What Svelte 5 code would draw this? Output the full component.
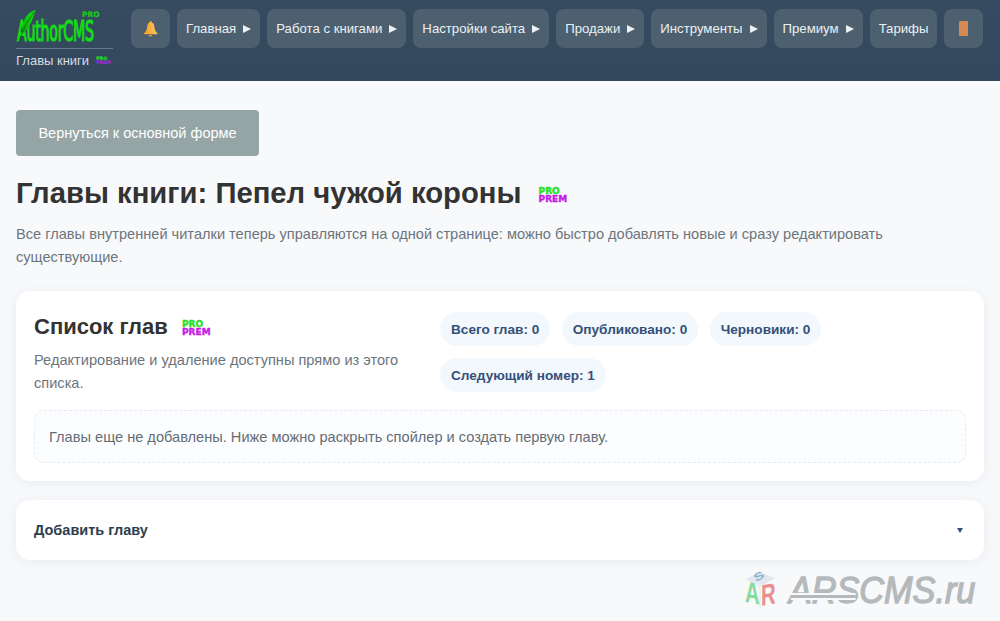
<script>
  const menu = [
    { t: 'Главная', a: true },
    { t: 'Работа с книгами', a: true },
    { t: 'Настройки сайта', a: true },
    { t: 'Продажи', a: true },
    { t: 'Инструменты', a: true },
    { t: 'Премиум', a: true },
    { t: 'Тарифы', a: false }
  ];
  const stats = ['Всего глав: 0', 'Опубликовано: 0', 'Черновики: 0', 'Следующий номер: 1'];
</script>

{#snippet badge(cls)}
  <span class="badge {cls}"><span class="pro">PRO</span><span class="prem">PREM</span></span>
{/snippet}

<header class="top">
  <div class="brand">
    <div class="logo">
      <span class="logotext">AuthorCMS</span>
      <svg class="quill" width="22" height="36" viewBox="0 0 22 36" aria-hidden="true">
        <defs><linearGradient id="q" x1="1" y1="0" x2="0" y2="1"><stop offset="0" stop-color="#0fe80f"/><stop offset="1" stop-color="#0da80d"/></linearGradient></defs>
        <path d="M18.5 1 C11 3 7.5 9 6 15 C5 18 5 21 5.5 24 C10 21 14 15 15.5 10 C16.5 7 17.5 4 18.5 1Z" fill="url(#q)"/>
        <path d="M17 3 L8 17 L2 33" stroke="#077a0c" stroke-width="1" fill="none"/>
      </svg>
      <span class="logopro">PRO</span>
    </div>
    <div class="sub">Главы книги {@render badge('tiny')}</div>
  </div>
  <nav class="nav">
    <button class="item icon" aria-label="Уведомления">
      <svg width="15" height="16" viewBox="0 0 15 16">
        <defs><linearGradient id="bell" x1="0" y1="0" x2="1" y2="0"><stop offset="0" stop-color="#f39c25"/><stop offset="1" stop-color="#fccb63"/></linearGradient></defs>
        <path d="M7.5 0.3c.9 0 1.5.6 1.6 1.4 1.6.6 2.2 2.1 2.3 4 .1 2.6.8 4.3 2.9 6.4.4.5.2 1.2-.5 1.2H1.7c-.7 0-.9-.7-.5-1.2 2.1-2.1 2.8-3.8 2.9-6.4.1-1.9.7-3.4 2.3-4 .1-.8.7-1.4 1.6-1.4z" fill="url(#bell)"/>
        <path d="M5.7 14.1h3.6c-.2 1-.9 1.6-1.8 1.6s-1.6-.6-1.8-1.6z" fill="#e2951f"/>
      </svg>
    </button>
    {#each menu as m}
      <button class="item">{m.t}{#if m.a}<span class="arrow"></span>{/if}</button>
    {/each}
    <button class="item icon" aria-label="Выход">
      <span class="door"></span>
    </button>
  </nav>
</header>

<main class="page">
  <button class="back">Вернуться к основной форме</button>
  <h1 class="title">Главы книги: Пепел чужой короны {@render badge('big')}</h1>
  <p class="lead">Все главы внутренней читалки теперь управляются на одной странице: можно быстро добавлять новые и сразу редактировать существующие.</p>

  <section class="card list">
    <div class="cols">
      <div class="left">
        <h2 class="h2">Список глав {@render badge('mid')}</h2>
        <p class="desc">Редактирование и удаление доступны прямо из этого списка.</p>
      </div>
      <div class="stats">
        {#each stats as s}
          <span class="stat">{s}</span>
        {/each}
      </div>
    </div>
    <div class="empty">Главы еще не добавлены. Ниже можно раскрыть спойлер и создать первую главу.</div>
  </section>

  <section class="card spoiler">
    <span class="sp-title">Добавить главу</span>
    <span class="caret"></span>
  </section>
</main>

<div class="wm">
  <svg class="cube" width="36" height="38" viewBox="0 0 36 38" aria-hidden="true">
    <path d="M2 8 L16 1 L31 7 L16 14Z" fill="#e4e8ee"/>
    <path d="M1 8 L16 15 L16 37 M31 7 L16 15" stroke="#e2e6ea" stroke-width="1" fill="none"/>
    <text x="0" y="0" font-size="13" font-weight="700" fill="#8db4cf" font-family="Liberation Sans, sans-serif" transform="translate(12 11) rotate(-28) scale(1.2 .85)">S</text>
    <text x="0" y="0" font-size="30" font-weight="700" fill="#85dc9e" font-family="Liberation Sans, sans-serif" transform="translate(1 31) skewY(10) scale(.68 1)">A</text>
    <text x="0" y="0" font-size="30" font-weight="700" fill="#e98f8f" font-family="Liberation Sans, sans-serif" transform="translate(17 35) skewY(-10) scale(.68 1)">R</text>
  </svg>
  <span class="wm-text">ARSCMS.ru<span class="wm-bar"></span></span>
</div>

<style>
  :global(body) {
    margin: 0;
    background: #f8f9fb;
    font-family: "Liberation Sans", Arial, sans-serif;
    color: #333;
  }
  :global(html), :global(body) { height: 621px; overflow: hidden; }
  .top {
    height: 81px;
    box-sizing: border-box;
    display: flex;
    align-items: flex-start;
    padding: 9px 16px 0;
    gap: 18px;
    background: linear-gradient(#364a60, #33485d);
  }
  .brand { width: 97px; flex: none; }
  .logo {
    position: relative;
    height: 39px;
    border-bottom: 1px solid #66788a;
    width: 97px;
  }
  .quill { position: absolute; left: 1px; top: 0; }
  .logotext {
    position: absolute;
    left: 1px;
    top: 11px;
    color: #13e013;
    font-family: "DejaVu Sans", sans-serif;
    font-weight: 400;
    font-size: 29px;
    line-height: 22px;
    letter-spacing: -.5px;
    -webkit-text-stroke: 1.2px currentColor;
    transform: scaleX(.49);
    transform-origin: left center;
    white-space: nowrap;
  }
  .logopro {
    position: absolute;
    left: 66px;
    top: 1px;
    color: #13d013;
    font-family: "DejaVu Sans", sans-serif;
    font-size: 7.5px;
    line-height: 9px;
    font-weight: 700;
    -webkit-text-stroke: .2px currentColor;
  }
  .sub {
    color: #d5dde3;
    font-size: 13px;
    line-height: 16px;
    margin-top: 4px;
    display: flex;
    align-items: center;
    gap: 7px;
    white-space: nowrap;
  }
  .nav {
    display: flex;
    gap: 7px;
    align-items: flex-start;
  }
  .item {
    height: 39px;
    border: 0;
    border-radius: 8px;
    background: #4d6070;
    color: #ecf0f3;
    font: 13.2px "Liberation Sans", Arial, sans-serif;
    padding: 0 9px;
    display: flex;
    align-items: center;
    gap: 7px;
    white-space: nowrap;
  }
  .item.icon {
    width: 39px;
    padding: 0;
    justify-content: center;
  }
  .arrow {
    width: 0;
    height: 0;
    border-left: 8px solid #eef1f4;
    border-top: 4.5px solid transparent;
    border-bottom: 4.5px solid transparent;
  }
  .door {
    width: 9px;
    height: 15px;
    background: #d58a55;
    border-radius: 1px;
  }
  .badge {
    display: inline-flex;
    flex-direction: column;
    align-items: flex-start;
    font-family: "DejaVu Sans", sans-serif;
    font-weight: 700;
    vertical-align: middle;
  }
  .pro { color: #22e01f; }
  .prem { color: #c61be8; }
  .badge.big, .badge.mid {
    font-size: 9px;
    line-height: 8.5px;
    margin-left: 8px;
    -webkit-text-stroke: .4px currentColor;
  }
  .badge.big { margin-left: 9px; }
  .badge.tiny {
    font-size: 4.7px;
    line-height: 4.5px;
    -webkit-text-stroke: .2px currentColor;
  }
  .tiny .prem { color: #9a2fd6; }
  .page {
    padding: 29px 16px 0;
  }
  .back {
    display: block;
    width: 243px;
    height: 46px;
    border: 0;
    border-radius: 4px;
    background: #95a5a6;
    color: #fff;
    font: 14.5px "Liberation Sans", Arial, sans-serif;
  }
  .title {
    margin: 20px 0 0;
    font-size: 29.25px;
    line-height: 34px;
    font-weight: 700;
    color: #333;
    white-space: nowrap;
  }
  .lead {
    margin: 13px 0 0;
    font-size: 14.6px;
    line-height: 23px;
    color: #6c757d;
  }
  .card {
    background: #fff;
    border-radius: 14px;
    box-shadow: 0 2px 12px rgba(30, 50, 80, .07);
  }
  .list {
    margin-top: 22px;
    padding: 22px 18px 18px;
  }
  .cols {
    display: grid;
    grid-template-columns: 385px 1fr;
    gap: 21px;
  }
  .h2 {
    margin: 0;
    font-size: 22px;
    line-height: 27px;
    font-weight: 700;
    color: #333;
  }
  .desc {
    margin: 9px 0 0;
    font-size: 14.6px;
    line-height: 23px;
    color: #6c757d;
  }
  .stats {
    display: flex;
    flex-wrap: wrap;
    gap: 12px 11.5px;
    align-content: flex-start;
    margin-top: -1px;
  }
  .stat {
    height: 34px;
    box-sizing: border-box;
    padding: 0 11px;
    border-radius: 17px;
    background: #f3f8fd;
    color: #34507a;
    font-size: 13.6px;
    font-weight: 700;
    display: flex;
    align-items: center;
  }
  .empty {
    margin-top: 15px;
    height: 53px;
    box-sizing: border-box;
    display: flex;
    align-items: center;
    padding: 0 14px;
    border: 1px dashed #e6eaef;
    border-radius: 10px;
    background: #fcfdfe;
    font-size: 14.6px;
    color: #646d76;
  }
  .spoiler {
    margin-top: 19px;
    height: 60px;
    padding: 0 18px;
    display: flex;
    align-items: center;
    justify-content: space-between;
  }
  .sp-title {
    font-size: 14.5px;
    font-weight: 700;
    color: #2c3e50;
  }
  .caret {
    width: 0;
    height: 0;
    border-top: 5px solid #34507a;
    border-left: 3px solid transparent;
    border-right: 3px solid transparent;
    margin-right: 3px;
  }
  .wm {
    position: absolute;
    left: 744px;
    top: 570px;
    display: flex;
    align-items: center;
    gap: 9px;
    pointer-events: none;
  }
  .cube { overflow: visible; }
  .wm-text {
    position: relative;
    font-size: 37px;
    line-height: 38px;
    margin-top: 2px;
    font-style: italic;
    font-weight: 400;
    color: #b5b9bc;
    -webkit-text-stroke: 1.4px currentColor;
    white-space: nowrap;
    transform: scaleX(.925);
    transform-origin: left center;
  }
  .wm-bar {
    position: absolute;
    left: 2px;
    top: 23px;
    width: 70px;
    height: 2.5px;
    background: #b5b9bc;
    box-shadow: 0 -2px 0 #f8f9fb, 0 2px 0 #f8f9fb;
  }
</style>
